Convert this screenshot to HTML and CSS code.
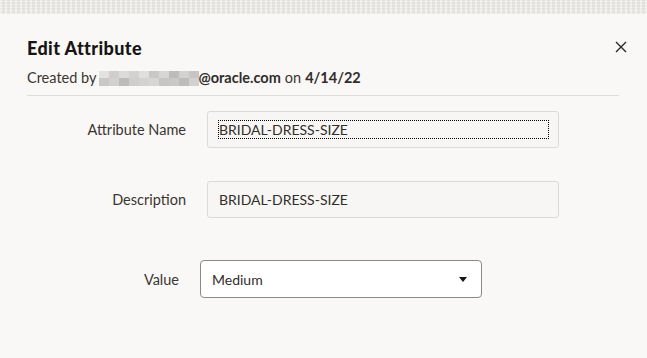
FILE: index.html
```html
<!DOCTYPE html>
<html lang="en">
<head>
<meta charset="utf-8">
<title>Edit Attribute</title>
<link rel="stylesheet" href="styles.css">
</head>
<body>
<div class="backdrop"></div>
<div class="dialog">
  <div class="header">
    <div class="heading">
      <h1 class="title">Edit Attribute</h1>
      <p class="meta"><span>Created by</span><span class="blur"><span class="blur-row"><i class="b1"></i><i class="b2"></i><i class="b3"></i><i class="b4"></i><i class="b5"></i><i class="b6"></i><i class="b7"></i><i class="b8"></i><i class="b9"></i><i class="b10"></i></span><span class="blur-row"><i class="b6"></i><i class="b4"></i><i class="b8"></i><i class="b2"></i><i class="b9"></i><i class="b7"></i><i class="b10"></i><i class="b6"></i><i class="b8"></i><i class="b4"></i></span></span><strong>@oracle.com</strong><span class="on">on</span><strong>4/14/22</strong></p>
    </div>
    <button class="close" aria-label="Close">
      <svg width="12" height="12" viewBox="0 0 12 12"><path d="M1 1L11 11M11 1L1 11" stroke="#2b2825" stroke-width="1.4" fill="none"/></svg>
    </button>
  </div>
  <div class="form">
    <div class="row">
      <label class="label">Attribute Name</label>
      <div class="input"><span class="focus">BRIDAL-DRESS-SIZE</span></div>
    </div>
    <div class="row">
      <label class="label">Description</label>
      <div class="input"><span class="plain">BRIDAL-DRESS-SIZE</span></div>
    </div>
    <div class="row row-value">
      <label class="label label-value">Value</label>
      <div class="select"><span>Medium</span><span class="caret"></span></div>
    </div>
  </div>
</div>
</body>
</html>
```
FILE: styles.css
```css
* { box-sizing: border-box; }
html, body { margin: 0; padding: 0; }
body {
  width: 647px;
  height: 358px;
  overflow: hidden;
  background: #f9f8f6;
  font-family: Lato, "Open Sans", sans-serif;
  color: #312d2a;
}
.backdrop {
  height: 14px;
  background-color: #ebe9e5;
  background-image:
    repeating-linear-gradient(90deg, rgba(255,255,255,0.35) 0 2px, rgba(0,0,0,0.02) 2px 5px),
    repeating-linear-gradient(0deg, rgba(255,255,255,0.25) 0 1px, rgba(0,0,0,0.02) 1px 3px);
}
.dialog {
  padding: 0 28px 0 27px;
}
.header {
  display: flex;
  justify-content: space-between;
  align-items: flex-start;
  border-bottom: 1px solid #dfddd9;
}
.title {
  margin: 23px 0 0;
  font-size: 18px;
  font-weight: 900;
  line-height: 22px;
  letter-spacing: 0.4px;
  color: #161513;
}
.meta {
  margin: 10px 0 0;
  font-size: 14.5px;
  line-height: 18px;
  color: #3a3632;
  padding-bottom: 8px;
  display: flex;
  align-items: center;
}
.meta strong { font-weight: 700; color: #312d2a; }
.on { margin: 0 4px; }
.blur {
  display: flex;
  flex-direction: column;
  height: 15px;
  margin: 0 0 0 3px;
  width: 99px;
}
.blur-row { display: flex; flex: 1; }
.blur i { flex: 1; display: block; }
.b1 { background: #e4e3e1; }
.b2 { background: #cfcecc; }
.b3 { background: #dcdbd9; }
.b4 { background: #d2d1cf; }
.b5 { background: #e0dfdd; }
.b6 { background: #c9c8c6; }
.b7 { background: #d7d6d4; }
.b8 { background: #bdbcba; }
.b9 { background: #d3d2d0; }
.b10 { background: #c6c5c3; }
.close {
  margin: 27px 0 0;
  padding: 0;
  border: 0;
  background: none;
  width: 12px;
  height: 12px;
  display: flex;
  margin-right: -8px;
}
.form {
  display: flex;
  flex-direction: column;
  gap: 33px;
  padding-top: 15px;
}
.row {
  display: flex;
  align-items: center;
  gap: 21px;
}
.row-value { margin-top: 9px; }
.label {
  width: 159px;
  text-align: right;
  font-size: 14.5px;
  color: #3a3632;
}
.label-value { width: 152px; }
.input {
  width: 352px;
  height: 37px;
  background: #f7f6f4;
  border: 1px solid #dcdad6;
  border-radius: 3px;
  display: flex;
  align-items: center;
  padding-left: 11px;
  font-size: 14px;
  color: #312d2a;
}
.focus {
  display: block;
  width: 329px;
  outline: 1px dotted #000;
  line-height: 17px;
}
.select {
  width: 282px;
  height: 38px;
  background: #fff;
  border: 1px solid #8c8985;
  border-radius: 4px;
  display: flex;
  align-items: center;
  justify-content: space-between;
  padding: 0 14px 0 11px;
  font-size: 14px;
  color: #312d2a;
}
.caret {
  width: 0;
  height: 0;
  border-left: 4.5px solid transparent;
  border-right: 4.5px solid transparent;
  border-top: 5px solid #161513;
}
```
